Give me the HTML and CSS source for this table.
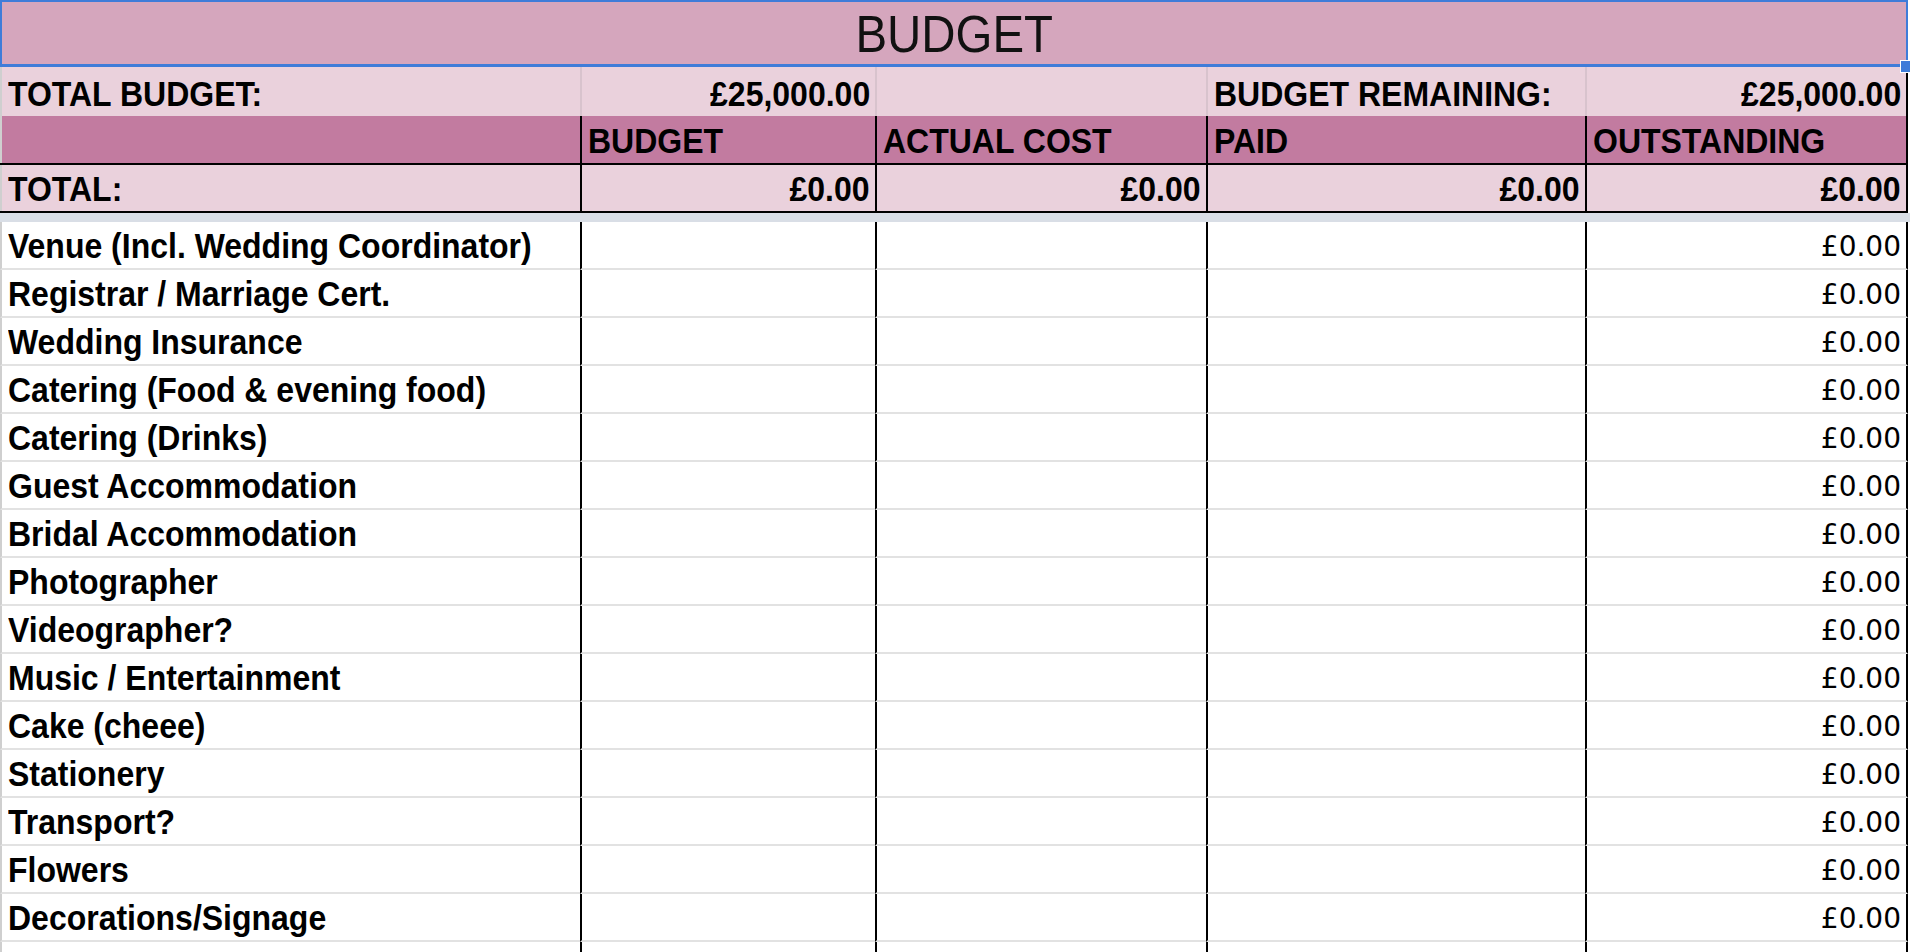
FILE: index.html
```html
<!DOCTYPE html>
<html lang="en">
<head>
<meta charset="utf-8">
<title>Budget</title>
<link rel="stylesheet" href="styles.css">
</head>
<body>
<div class="sheet">
  <div class="title"><span class="title-text">BUDGET</span><span class="handle"></span></div>

  <div class="row summary">
    <div class="cell"><span class="t">TOTAL BUDGET:</span></div>
    <div class="cell num"><span class="t">£25,000.00</span></div>
    <div class="cell"></div>
    <div class="cell"><span class="t">BUDGET REMAINING:</span></div>
    <div class="cell num"><span class="t">£25,000.00</span></div>
  </div>

  <div class="row head">
    <div class="cell"></div>
    <div class="cell"><span class="t">BUDGET</span></div>
    <div class="cell"><span class="t">ACTUAL COST</span></div>
    <div class="cell"><span class="t">PAID</span></div>
    <div class="cell"><span class="t">OUTSTANDING</span></div>
  </div>

  <div class="row total">
    <div class="cell"><span class="t">TOTAL:</span></div>
    <div class="cell num"><span class="t">£0.00</span></div>
    <div class="cell num"><span class="t">£0.00</span></div>
    <div class="cell num"><span class="t">£0.00</span></div>
    <div class="cell num"><span class="t">£0.00</span></div>
  </div>

  <div class="freeze"></div>

  <div class="row item"><div class="cell"><span class="t">Venue (Incl. Wedding Coordinator)</span></div><div class="cell"></div><div class="cell"></div><div class="cell"></div><div class="cell num plain"><span class="p">£0.00</span></div></div>
  <div class="row item"><div class="cell"><span class="t">Registrar / Marriage Cert.</span></div><div class="cell"></div><div class="cell"></div><div class="cell"></div><div class="cell num plain"><span class="p">£0.00</span></div></div>
  <div class="row item"><div class="cell"><span class="t">Wedding Insurance</span></div><div class="cell"></div><div class="cell"></div><div class="cell"></div><div class="cell num plain"><span class="p">£0.00</span></div></div>
  <div class="row item"><div class="cell"><span class="t">Catering (Food &amp; evening food)</span></div><div class="cell"></div><div class="cell"></div><div class="cell"></div><div class="cell num plain"><span class="p">£0.00</span></div></div>
  <div class="row item"><div class="cell"><span class="t">Catering (Drinks)</span></div><div class="cell"></div><div class="cell"></div><div class="cell"></div><div class="cell num plain"><span class="p">£0.00</span></div></div>
  <div class="row item"><div class="cell"><span class="t">Guest Accommodation</span></div><div class="cell"></div><div class="cell"></div><div class="cell"></div><div class="cell num plain"><span class="p">£0.00</span></div></div>
  <div class="row item"><div class="cell"><span class="t">Bridal Accommodation</span></div><div class="cell"></div><div class="cell"></div><div class="cell"></div><div class="cell num plain"><span class="p">£0.00</span></div></div>
  <div class="row item"><div class="cell"><span class="t">Photographer</span></div><div class="cell"></div><div class="cell"></div><div class="cell"></div><div class="cell num plain"><span class="p">£0.00</span></div></div>
  <div class="row item"><div class="cell"><span class="t">Videographer?</span></div><div class="cell"></div><div class="cell"></div><div class="cell"></div><div class="cell num plain"><span class="p">£0.00</span></div></div>
  <div class="row item"><div class="cell"><span class="t">Music / Entertainment</span></div><div class="cell"></div><div class="cell"></div><div class="cell"></div><div class="cell num plain"><span class="p">£0.00</span></div></div>
  <div class="row item"><div class="cell"><span class="t">Cake (cheee)</span></div><div class="cell"></div><div class="cell"></div><div class="cell"></div><div class="cell num plain"><span class="p">£0.00</span></div></div>
  <div class="row item"><div class="cell"><span class="t">Stationery</span></div><div class="cell"></div><div class="cell"></div><div class="cell"></div><div class="cell num plain"><span class="p">£0.00</span></div></div>
  <div class="row item"><div class="cell"><span class="t">Transport?</span></div><div class="cell"></div><div class="cell"></div><div class="cell"></div><div class="cell num plain"><span class="p">£0.00</span></div></div>
  <div class="row item"><div class="cell"><span class="t">Flowers</span></div><div class="cell"></div><div class="cell"></div><div class="cell"></div><div class="cell num plain"><span class="p">£0.00</span></div></div>
  <div class="row item"><div class="cell"><span class="t">Decorations/Signage</span></div><div class="cell"></div><div class="cell"></div><div class="cell"></div><div class="cell num plain"><span class="p">£0.00</span></div></div>
  <div class="row item"><div class="cell"></div><div class="cell"></div><div class="cell"></div><div class="cell"></div><div class="cell"></div></div>
</div>
</body>
</html>
```

FILE: styles.css
```css
html, body {
  margin: 0;
  padding: 0;
  background: #ffffff;
  overflow: hidden;
}

body {
  font-family: "Liberation Sans", Arial, sans-serif;
  color: #000;
}

.sheet {
  width: 1910px;
  height: 952px;
  overflow: hidden;
}

.title {
  position: relative;
  box-sizing: border-box;
  width: 1908px;
  height: 67px;
  background: #d5a6bd;
  border: 2px solid #3f7cd9;
  border-bottom-width: 3px;
  display: flex;
  align-items: center;
  justify-content: center;
}

.title-text {
  display: inline-block;
  font-size: 51px;
  line-height: 1;
  color: #111;
  padding-top: 3px;
  transform: scaleX(0.93);
}

.handle {
  position: absolute;
  right: -5px;
  bottom: -9px;
  width: 9px;
  height: 11px;
  background: #3f7cd9;
  border: 1px solid #ffffff;
}

.row {
  display: grid;
  grid-template-columns: 580px 295px 331px 379px 323px;
  width: 1908px;
  box-sizing: border-box;
}

.cell {
  box-sizing: border-box;
  display: flex;
  align-items: flex-end;
  min-width: 0;
  padding: 0 5px 5px 6px;
  font-size: 35px;
  font-weight: bold;
  line-height: 1;
  white-space: nowrap;
  overflow: hidden;
}

.t {
  display: inline-block;
  flex: none;
  transform: scaleX(0.914);
  transform-origin: left bottom;
}

.num .t {
  transform-origin: right bottom;
}

.cell:first-child {
  border-left: 2px solid #cfcfcf;
}

.cell + .cell {
  border-left: 2px solid #000;
}

.cell:last-child {
  border-right: 2px solid #000;
}

.num {
  justify-content: flex-end;
}

.summary {
  height: 49px;
  background: #ead1dc;
}

.summary .cell + .cell {
  border-left-color: #d8c3cd;
}

.summary .cell:last-child {
  border-right-color: #000;
}

.head {
  height: 49px;
  background: #c27ba0;
  border-bottom: 2px solid #000;
}

.total {
  height: 48px;
  background: #ead1dc;
  border-bottom: 2px solid #000;
}

.freeze {
  width: 1910px;
  height: 9px;
  background: #d9dee6;
}

.item {
  height: 48px;
}

.item .cell {
  border-bottom: 2px solid #e2e2e2;
}

.plain {
  font-family: "DejaVu Sans", Verdana, sans-serif;
  font-weight: normal;
  font-size: 28px;
  padding-bottom: 7px;
}

.p {
  display: inline-block;
  flex: none;
}
```
